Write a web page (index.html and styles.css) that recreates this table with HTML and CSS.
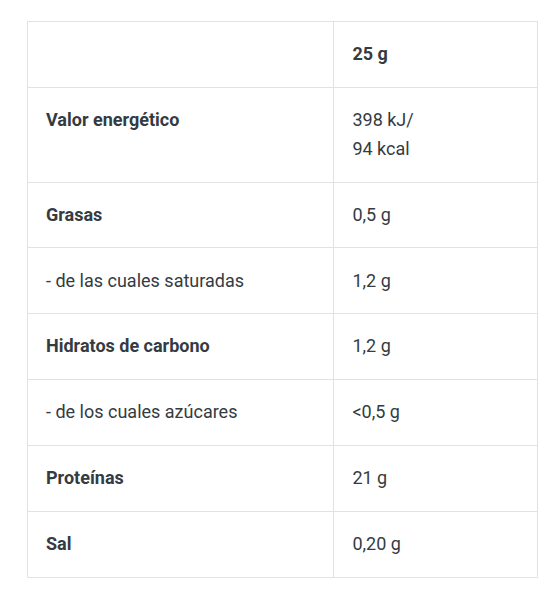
FILE: index.html
```html
<!DOCTYPE html>
<html lang="es">
<head>
<meta charset="utf-8">
<title>Información nutricional</title>
<link rel="stylesheet" href="styles.css">
</head>
<body>
<table class="nutri">
  <colgroup><col class="c1"><col class="c2"></colgroup>
  <tr><td></td><td class="b">25 g</td></tr>
  <tr><td class="b">Valor energético</td><td>398 kJ/<br>94 kcal</td></tr>
  <tr><td class="b">Grasas</td><td>0,5 g</td></tr>
  <tr><td>- de las cuales saturadas</td><td>1,2 g</td></tr>
  <tr><td class="b">Hidratos de carbono</td><td>1,2 g</td></tr>
  <tr><td>- de los cuales azúcares</td><td>&lt;0,5 g</td></tr>
  <tr><td class="b">Proteínas</td><td>21 g</td></tr>
  <tr><td class="b">Sal</td><td>0,20 g</td></tr>
</table>
</body>
</html>
```
FILE: styles.css
```css
html, body { margin: 0; background: #fff; }
body { padding: 21px 0 0 27px; }
.nutri {
  border-collapse: collapse;
  width: 511px;
  font-family: Roboto, "Liberation Sans", sans-serif;
  font-size: 18px;
  line-height: 1.6;
  color: #343b42;
}
.c1 { width: 307px; }
.c2 { width: 204px; }
.nutri td {
  border: 1px solid #e2e2e2;
  padding: 18.1px 18px 18px;
  vertical-align: top;
  height: 28.8px;
}
.nutri .b { font-weight: 700; }
```
